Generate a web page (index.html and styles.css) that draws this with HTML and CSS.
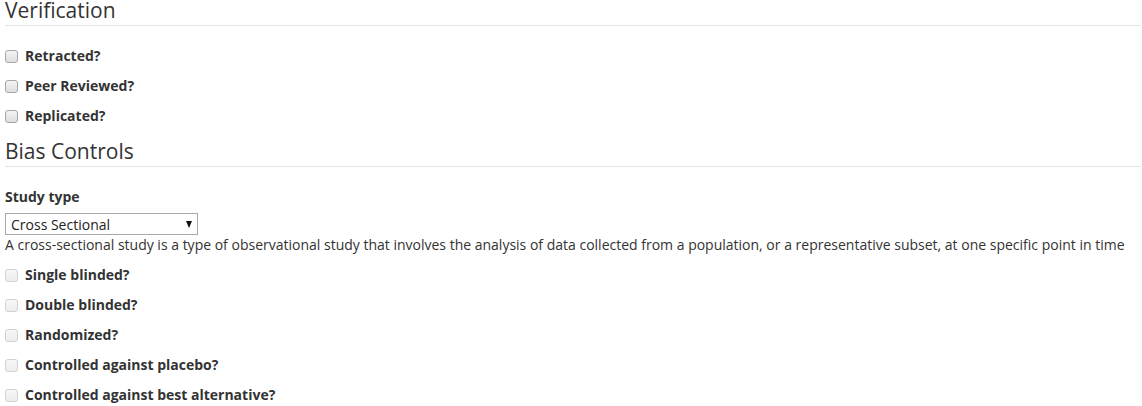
FILE: index.html
```html
<!DOCTYPE html>
<html>
<head>
<meta charset="utf-8">
<link rel="stylesheet" href="styles.css">
</head>
<body>
<div class="page">
  <div class="fieldset first">
    <div class="legend">Verification</div>
    <div class="checkbox"><label><input type="checkbox"> Retracted?</label></div>
    <div class="checkbox"><label><input type="checkbox"> Peer Reviewed?</label></div>
    <div class="checkbox"><label><input type="checkbox"> Replicated?</label></div>
  </div>
  <div class="fieldset">
    <div class="legend">Bias Controls</div>
    <div class="form-group">
      <label class="control-label">Study type</label>
      <div class="select-wrap">
        <select class="select">
          <option>Cross Sectional</option>
        </select>
      </div>
      <div class="help-block">A cross-sectional study is a type of observational study that involves the analysis of data collected from a population, or a representative subset, at one specific point in time</div>
    </div>
    <div class="checkbox"><label><input type="checkbox" disabled> Single blinded?</label></div>
    <div class="checkbox"><label><input type="checkbox" disabled> Double blinded?</label></div>
    <div class="checkbox"><label><input type="checkbox" disabled> Randomized?</label></div>
    <div class="checkbox"><label><input type="checkbox" disabled> Controlled against placebo?</label></div>
    <div class="checkbox"><label><input type="checkbox" disabled> Controlled against best alternative?</label></div>
  </div>
</div>
</body>
</html>
```

FILE: styles.css
```css
html, body {
  margin: 0;
  padding: 0;
  background: #fff;
}
body {
  font-family: "Open Sans", "Liberation Sans", sans-serif;
  font-size: 14px;
  line-height: 20px;
  color: #333;
}
.page {
  padding: 0 1px 0 5px;
}
.fieldset.first {
  margin-top: -5px;
}
.legend {
  font-size: 21px;
  line-height: 30px;
  color: #333;
  border-bottom: 1px solid #e5e5e5;
  margin-bottom: 20px;
}
.checkbox {
  margin: 10px 0;
  min-height: 20px;
}
.checkbox label {
  display: flex;
  align-items: center;
  font-weight: 700;
  min-height: 20px;
}
.checkbox input {
  appearance: none;
  -webkit-appearance: none;
  width: 13px;
  height: 13px;
  margin: 0 7px 0 0;
  border: 1px solid #a6a6a6;
  border-radius: 3px;
  background: linear-gradient(#f4f4f4, #dedede);
  box-sizing: border-box;
  flex: none;
}
.checkbox input:disabled {
  border-color: #d2d2d2;
  background: linear-gradient(#f7f7f7, #ededed);
}
.form-group {
  margin-bottom: 9px;
}
.control-label {
  display: inline-block;
  font-weight: 700;
  margin-bottom: 6px;
}
.select-wrap {
  position: relative;
  width: 193px;
}
.select {
  appearance: none;
  -webkit-appearance: none;
  display: block;
  width: 193px;
  height: 22px;
  margin: 0;
  padding: 0 0 0 5px;
  box-sizing: border-box;
  border: 1px solid #a9a9a9;
  border-radius: 0;
  background: #fff;
  font-family: "Open Sans", "Liberation Sans", sans-serif;
  font-size: 14px;
  color: #222;
}
.select-wrap::after {
  content: "";
  position: absolute;
  right: 6px;
  top: 8px;
  border-left: 3.5px solid transparent;
  border-right: 3.5px solid transparent;
  border-top: 7px solid #111;
  pointer-events: none;
}
.help-block {
  margin: 0;
  color: #333;
}
```
